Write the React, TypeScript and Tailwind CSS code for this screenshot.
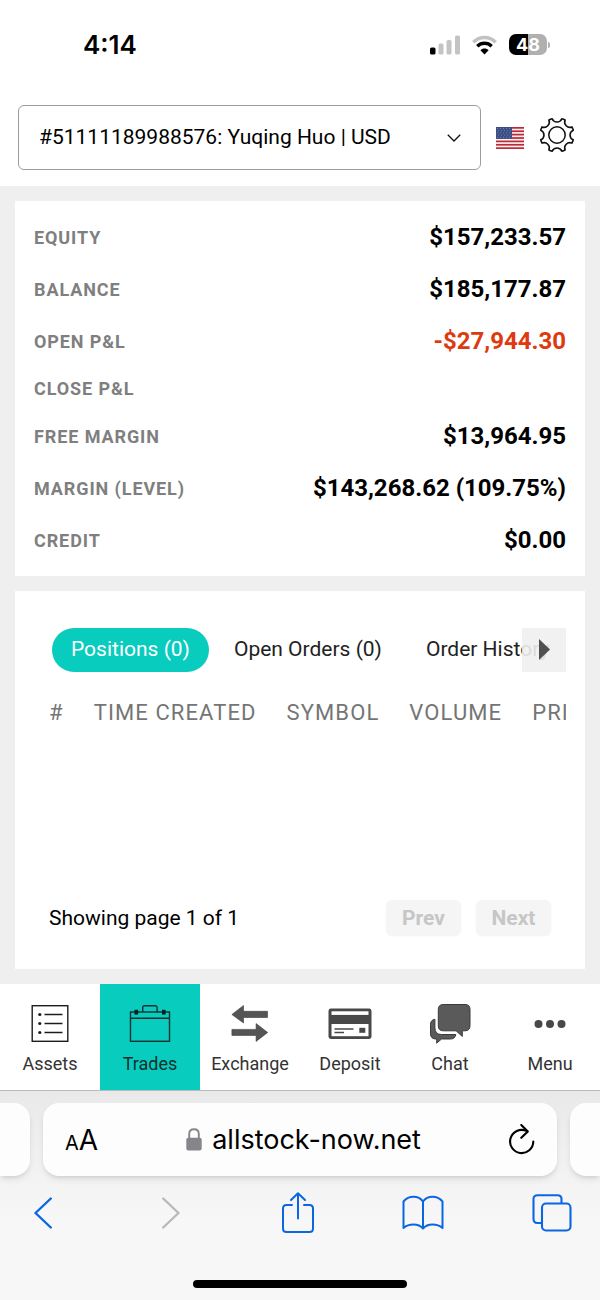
import React, { useState } from 'react';

type SummaryRow = { label: string; value?: string; negative?: boolean };

const SUMMARY: SummaryRow[] = [
  { label: 'EQUITY', value: '$157,233.57' },
  { label: 'BALANCE', value: '$185,177.87' },
  { label: 'OPEN P&L', value: '-$27,944.30', negative: true },
  { label: 'CLOSE P&L' },
  { label: 'FREE MARGIN', value: '$13,964.95' },
  { label: 'MARGIN (LEVEL)', value: '$143,268.62 (109.75%)' },
  { label: 'CREDIT', value: '$0.00' },
];

const TABS = ['Positions (0)', 'Open Orders (0)', 'Order History'];

const COLUMNS = ['#', 'TIME CREATED', 'SYMBOL', 'VOLUME', 'PRICE'];

// Eight teeth joined by concave scoops
function gearPath() {
  const point = (deg: number) => {
    const rad = (deg * Math.PI) / 180;
    return `${(18 + 17 * Math.cos(rad)).toFixed(2)} ${(18 + 17 * Math.sin(rad)).toFixed(2)}`;
  };
  let d = '';
  for (let i = 0; i < 8; i++) {
    const mid = 22.5 + i * 45;
    d += `${i === 0 ? 'M' : 'L'}${point(mid - 6)}`;
    d += `A17 17 0 0 1 ${point(mid + 6)}`;
    d += `A5.2 5.2 0 0 0 ${point(mid + 39)}`;
  }
  return d + 'Z';
}

function StatusBar() {
  return (
    <div className="flex h-[89px] items-center justify-between pr-[50px] pl-[83px] font-['Inter',sans-serif]">
      <span className="text-[26px] leading-8 font-semibold text-black">4:14</span>
      <div className="flex items-center gap-3">
        <svg width="30" height="20" viewBox="0 0 30 20" aria-hidden="true">
          <rect x="0" y="12.5" width="5.5" height="7" rx="1.6" fill="#000" />
          <rect x="8.5" y="8.5" width="5" height="11" rx="1.6" fill="#c4c4c4" />
          <rect x="16.5" y="5" width="5" height="14.5" rx="1.6" fill="#c4c4c4" />
          <rect x="25" y="0.5" width="5" height="19" rx="1.6" fill="#c4c4c4" />
        </svg>
        <svg width="25" height="20" viewBox="0 0 25 20" fill="none" aria-hidden="true">
          <path d="M1.3 7.2C7.6 0.9 17.4 0.9 23.7 7.2" stroke="#c2c2c2" strokeWidth="3.4" />
          <path d="M5.3 11.2C9.4 7.3 15.6 7.3 19.7 11.2" stroke="#000" strokeWidth="3.4" />
          <path d="M8.4 15.2C10.7 12.9 14.3 12.9 16.6 15.2L12.5 19.4Z" fill="#000" />
        </svg>
        <div className="flex items-center gap-px">
          <div className="flex h-[21px] w-[38px] items-center justify-center rounded-[7px] bg-linear-to-r from-black from-50% to-[#b0b0b0] to-50% text-[18px] leading-none font-bold text-white">
            48
          </div>
          <div className="h-[6px] w-[2px] rounded-r-full bg-[#b0b0b0]" />
        </div>
      </div>
    </div>
  );
}

function UsFlag() {
  return (
    <svg width="28" height="22" viewBox="0 0 28 22" aria-hidden="true">
      <rect width="28" height="22" fill="#f7f1f1" />
      {[0, 1, 2, 3, 4, 5, 6].map(i => (
        <rect key={i} y={i * 3.385} width="28" height="1.7" fill="#bb2a36" />
      ))}
      <rect width="16" height="11.8" fill="#3a4f86" />
      {[0, 1, 2, 3, 4].map(row =>
        [0, 1, 2, 3, 4].map(col => (
          <circle
            key={`${row}-${col}`}
            cx={1.6 + col * 3 + (row % 2) * 0.9}
            cy={1.5 + row * 2.2}
            r="0.45"
            fill="#a9b5d2"
          />
        ))
      )}
    </svg>
  );
}

function AccountHeader() {
  return (
    <header className="flex items-center py-4 pr-[25px] pl-[18px]">
      <div className="relative flex-1">
        <select
          aria-label="Account"
          className="h-[65px] w-full appearance-none rounded-md border border-[#9c9c9c] bg-white pr-12 pl-5 text-[21px] text-black"
        >
          <option>#51111189988576: Yuqing Huo | USD</option>
        </select>
        <svg
          className="pointer-events-none absolute top-1/2 right-5 -translate-y-1/2"
          width="14"
          height="8"
          viewBox="0 0 14 8"
          fill="none"
          aria-hidden="true"
        >
          <path d="M0.8 0.8L7 7L13.2 0.8" stroke="#111" strokeWidth="1.3" />
        </svg>
      </div>
      <button type="button" aria-label="Language" className="ml-[15px]">
        <UsFlag />
      </button>
      <button type="button" aria-label="Settings" className="mb-[6px] ml-[15px]">
        <svg width="36" height="36" viewBox="0 0 36 36" fill="none" stroke="#111" strokeLinejoin="round">
          <path d={gearPath()} strokeWidth="1.6" />
          <circle cx="18" cy="18" r="8.2" strokeWidth="1.5" />
        </svg>
      </button>
    </header>
  );
}

function AccountSummary() {
  return (
    <section className="bg-white px-[19px] py-[10px]">
      <dl>
        {SUMMARY.map(row => (
          <div key={row.label} className="flex items-center justify-between py-3">
            <dt className="text-[18px] leading-[19px] font-bold tracking-wider text-[#7f7f7f]">
              {row.label}
            </dt>
            {row.value && (
              <dd
                className={`text-[24px] leading-7 font-bold ${
                  row.negative ? 'text-[#dd3a10]' : 'text-black'
                }`}
              >
                {row.value}
              </dd>
            )}
          </div>
        ))}
      </dl>
    </section>
  );
}

function PositionsPanel() {
  const [active, setActive] = useState(TABS[0]);

  return (
    <section className="bg-white px-[19px] pt-[37px] pb-[34px]">
      <div className="relative overflow-hidden">
        <div role="tablist" className="flex gap-[6px] pl-[18px]">
          {TABS.map(tab => (
            <button
              key={tab}
              type="button"
              role="tab"
              aria-selected={tab === active}
              onClick={() => setActive(tab)}
              className={`h-11 shrink-0 rounded-full px-[19px] text-[21px] whitespace-nowrap ${
                tab === active ? 'bg-[#08ccbe] text-white' : 'text-[#222]'
              }`}
            >
              {tab}
            </button>
          ))}
        </div>
        <button
          type="button"
          aria-label="Scroll tabs"
          className="absolute top-0 right-0 flex size-11 items-center justify-center bg-[#efefef]/90"
        >
          <svg width="11" height="22" viewBox="0 0 11 22" aria-hidden="true">
            <path d="M0 0L11 10.5L0 21Z" fill="#4f4f4f" />
          </svg>
        </button>
      </div>

      <div className="h-[216px] overflow-hidden pt-[23px]">
        <table className="border-collapse">
          <thead>
            <tr>
              {COLUMNS.map(column => (
                <th
                  key={column}
                  scope="col"
                  className="px-[15px] py-1 text-left text-[22px] leading-7 font-normal tracking-wider whitespace-nowrap text-[#757575]"
                >
                  {column}
                </th>
              ))}
            </tr>
          </thead>
        </table>
      </div>

      <div className="mt-3 flex items-center justify-between px-[15px]">
        <p className="text-[21px] leading-7 text-black">Showing page 1 of 1</p>
        <div className="flex gap-[15px]">
          <button
            type="button"
            disabled
            className="h-[35px] w-[75px] rounded-md bg-[#f5f5f5] text-[21px] leading-7 font-bold text-[#c6c6c6] shadow-xs"
          >
            Prev
          </button>
          <button
            type="button"
            disabled
            className="h-[35px] w-[75px] rounded-md bg-[#f5f5f5] text-[21px] leading-7 font-bold text-[#c6c6c6] shadow-xs"
          >
            Next
          </button>
        </div>
      </div>
    </section>
  );
}

const NAV_ITEMS = [
  {
    label: 'Assets',
    icon: (
      <g fill="none" stroke="#1c1c1c" strokeWidth="1.4">
        <rect x="4.7" y="2.7" width="35.6" height="35.6" />
        <path d="M17 11.5H35M17 20.5H35M17 29.5H35" />
        <g fill="#1c1c1c" stroke="none">
          <circle cx="12.3" cy="11.5" r="1.6" />
          <circle cx="12.3" cy="20.5" r="1.6" />
          <circle cx="12.3" cy="29.5" r="1.6" />
        </g>
      </g>
    ),
  },
  {
    label: 'Trades',
    icon: (
      <g fill="none" stroke="#12302e" strokeWidth="1.4">
        <rect x="3" y="9" width="39" height="29.3" />
        <path d="M3 15.3H42" />
        <path d="M15.2 9V4.7Q15.2 2.7 17.2 2.7H27.6Q29.6 2.7 29.6 4.7V9" />
        <rect x="7" y="6.8" width="3.6" height="4.8" fill="#0d1f1e" stroke="none" />
        <rect x="34.5" y="6.8" width="3.6" height="4.8" fill="#0d1f1e" stroke="none" />
      </g>
    ),
  },
  {
    label: 'Exchange',
    icon: (
      <g fill="#555" stroke="#3c3c3c" strokeWidth="0.6">
        <path d="M4.4 11.5L16 2.5V8.3H40V14.5H16V20Z" />
        <path d="M40.2 29.5L28.6 20.6V26.4H4.4V32.4H28.6V38.4Z" />
      </g>
    ),
  },
  {
    label: 'Deposit',
    icon: (
      <g>
        <rect x="1" y="5.5" width="43" height="30.5" rx="2.4" fill="#484848" />
        <rect x="4" y="8.3" width="37" height="3.6" fill="#fff" />
        <rect x="4" y="21" width="37" height="12.2" fill="#fff" />
        <path d="M7 26H26M7 29.4H16.5" stroke="#484848" strokeWidth="1.5" />
        <rect x="31.8" y="24.8" width="6" height="5" fill="#484848" />
      </g>
    ),
  },
  {
    label: 'Chat',
    icon: (
      <g fill="#5a5a5a" stroke="#3a3a3a" strokeWidth="1" strokeLinejoin="round">
        <path d="M15.8 1.5H37.5Q42.5 1.5 42.5 6.5V22.5Q42.5 27.8 37.5 27.8H34.8V33.4L28.6 27.8H15.8Q10.8 27.8 10.8 22.8V6.5Q10.8 1.5 15.8 1.5Z" />
        <path d="M7.4 16.3Q3 17 3 21.5V30.5Q3 36 8.5 36H9.2V40.2L14 36H23Q27.5 36 28.3 31.5H14Q7.4 31.5 7.4 25Z" />
      </g>
    ),
  },
  {
    label: 'Menu',
    icon: (
      <g fill="#484848">
        <circle cx="11" cy="21" r="4" />
        <circle cx="22.5" cy="21" r="4" />
        <circle cx="34" cy="21" r="4" />
      </g>
    ),
  },
];

function BottomNav() {
  const [current, setCurrent] = useState('Trades');

  return (
    <nav className="grid grid-cols-6 border-b border-[#bcbcbc] bg-white">
      {NAV_ITEMS.map(item => (
        <button
          key={item.label}
          type="button"
          aria-current={item.label === current ? 'page' : undefined}
          onClick={() => setCurrent(item.label)}
          className={`flex flex-col items-center pt-[19px] pb-[14px] ${
            item.label === current ? 'bg-[#08ccbe] text-[#12302e]' : 'text-[#333]'
          }`}
        >
          <svg width="46" height="42" viewBox="0 0 45 42" aria-hidden="true">
            {item.icon}
          </svg>
          <span className="mt-[7px] text-[18px] leading-6">{item.label}</span>
        </button>
      ))}
    </nav>
  );
}

function BrowserBar() {
  return (
    <footer className="overflow-hidden bg-linear-to-b from-[#e9e9e9] to-[#f7f7f7] to-60% pt-3 pb-3 font-['Inter',sans-serif]">
      <div className="flex gap-[13px]">
        <div className="w-[30px] rounded-r-2xl bg-[#fdfdfd] shadow-md" />
        <div className="flex h-[73px] flex-1 items-center justify-between rounded-2xl bg-[#fdfdfd] px-[22px] text-black shadow-md">
          <button type="button" aria-label="Page settings" className="flex items-baseline pt-1">
            <span className="text-[20px] leading-8">A</span>
            <span className="text-[28px] leading-8">A</span>
          </button>
          <a href="#" className="flex items-center gap-[10px]">
            <svg width="16" height="23" viewBox="0 0 16 23" fill="none" aria-hidden="true">
              <path d="M3.2 10.5V6Q3.2 1.3 8 1.3T12.8 6V10.5" stroke="#85858a" strokeWidth="1.9" />
              <rect x="0.3" y="9.8" width="15.4" height="12.8" rx="2" fill="#85858a" />
            </svg>
            <span className="text-[27px] leading-8">allstock-now.net</span>
          </a>
          <button type="button" aria-label="Reload">
            <svg width="26" height="31" viewBox="0 0 26 31" fill="none" stroke="#000" strokeWidth="2.1" strokeLinecap="round" strokeLinejoin="round">
              <path d="M24.3 17.6A11.6 11.6 0 1 1 17.4 6.9" />
              <path d="M12.3 1L18.8 7.4L12.3 13.8" />
            </svg>
          </button>
        </div>
        <div className="w-[30px] rounded-l-2xl bg-[#fdfdfd] shadow-md" />
      </div>

      <div className="mt-4 flex h-[42px] items-center justify-between pr-[28px] pl-[33px] text-[#0b66e4]">
        <button type="button" aria-label="Back">
          <svg width="20" height="32" viewBox="0 0 20 32" fill="none" stroke="currentColor" strokeWidth="2.4" strokeLinecap="round" strokeLinejoin="round">
            <path d="M17.8 1.5L2.5 16L17.8 30.5" />
          </svg>
        </button>
        <button type="button" aria-label="Forward" disabled className="ml-5 text-[#b9b9b9]">
          <svg width="20" height="32" viewBox="0 0 20 32" fill="none" stroke="currentColor" strokeWidth="2.4" strokeLinecap="round" strokeLinejoin="round">
            <path d="M2.2 1.5L17.5 16L2.2 30.5" />
          </svg>
        </button>
        <button type="button" aria-label="Share" className="ml-3">
          <svg width="34" height="42" viewBox="0 0 34 42" fill="none" stroke="currentColor" strokeWidth="2" strokeLinecap="round" strokeLinejoin="round">
            <path d="M11 13H5.5Q2 13 2 16.5V36.5Q2 40 5.5 40H28.5Q32 40 32 36.5V16.5Q32 13 28.5 13H23" />
            <path d="M17 26.5V1.5M10 8L17 1.3L24 8" />
          </svg>
        </button>
        <button type="button" aria-label="Bookmarks">
          <svg width="42" height="36" viewBox="0 0 42 36" fill="none" stroke="currentColor" strokeWidth="2" strokeLinejoin="round">
            <path d="M21 6.5Q17.5 1.8 11.5 1.8T1.5 6.5V33Q5.5 29.5 11.5 29.5T21 33.5Q24.5 29.5 30.5 29.5T40.5 33V6.5Q36.5 1.8 30.5 1.8T21 6.5V33.5" />
          </svg>
        </button>
        <button type="button" aria-label="Tabs">
          <svg width="40" height="38" viewBox="0 0 40 38" fill="none" stroke="currentColor" strokeWidth="2.1" strokeLinejoin="round">
            <path d="M10 29H5.5Q1.5 29 1.5 25V5Q1.5 1.2 5.5 1.2H25.5Q29.5 1.2 29.5 5V9.5" />
            <rect x="10" y="9.5" width="28.5" height="27" rx="4" />
          </svg>
        </button>
      </div>

      <div className="mx-auto mt-[46px] h-2 w-[214px] rounded-full bg-black" />
    </footer>
  );
}

export default function App() {
  return (
    <div className="min-h-screen bg-white font-['Roboto',sans-serif]">
      <StatusBar />
      <AccountHeader />
      <main className="flex flex-col gap-[15px] bg-[#efefef] p-[15px]">
        <AccountSummary />
        <PositionsPanel />
      </main>
      <BottomNav />
      <BrowserBar />
    </div>
  );
}
